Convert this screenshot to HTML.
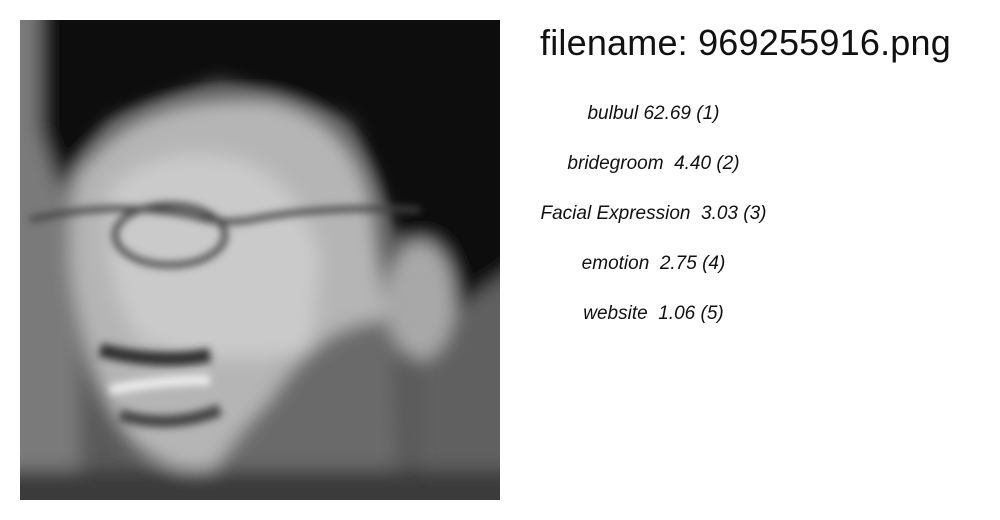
<!DOCTYPE html>
<html><head><style>
html,body{margin:0;padding:0;background:#fff;width:1000px;height:520px;overflow:hidden;font-family:"Liberation Sans","DejaVu Sans",sans-serif}
.img{position:absolute;left:20px;top:20px;width:480px;height:480px}
.t{position:absolute;left:540px;top:22px;font-size:36px;color:#111;white-space:nowrap;letter-spacing:0.2px}
.l{position:absolute;left:540px;width:227px;text-align:center;font-style:italic;font-size:19px;color:#111;white-space:pre}
</style></head><body>
<svg class="img" viewBox="0 0 480 480">
<defs>
<filter id="b" x="-20%" y="-20%" width="140%" height="140%"><feGaussianBlur stdDeviation="9"/></filter>
<filter id="b2"><feGaussianBlur stdDeviation="4"/></filter>
<clipPath id="c"><rect width="480" height="480"/></clipPath>
</defs>
<g clip-path="url(#c)">
<rect width="480" height="480" fill="#5a5a5a"/>
<g filter="url(#b)">
<rect x="-40" y="-40" width="100" height="560" fill="#7a7a7a"/>
<rect x="400" y="60" width="120" height="460" fill="#606060"/>
<path d="M20 -40 H520 V230 L420 300 L370 200 L330 100 L200 60 L90 100 L40 170 L20 110 Z" fill="#111"/>
<path d="M60 150 Q120 70 250 80 Q340 100 355 200 L370 330 Q350 420 260 450 Q160 470 110 420 Q70 370 60 300 Q40 220 60 150Z" fill="#b5b5b5"/>
<path d="M90 170 Q140 120 220 140 Q280 160 300 240 L290 330 Q200 350 120 320 Q80 260 90 170Z" fill="#cacaca"/>
<ellipse cx="400" cy="280" rx="35" ry="60" fill="#a8a8a8"/>
<path d="M250 380 Q300 300 370 300 L380 520 H150 Q200 430 250 380Z" fill="#6a6a6a"/>
<rect x="-40" y="450" width="560" height="70" fill="#3a3a3a"/>
</g>
<g filter="url(#b2)" fill="none" stroke="#444" stroke-width="6">
<path d="M10 200 Q90 180 170 195 Q200 205 230 200 Q300 185 400 190"/>
<ellipse cx="150" cy="215" rx="55" ry="30"/>
<path d="M80 330 Q140 345 190 335" stroke="#333" stroke-width="14"/>
<path d="M90 370 Q140 360 190 360" stroke="#eee" stroke-width="10"/>
<path d="M100 395 Q150 410 200 390" stroke="#444" stroke-width="12"/>
</g>
</g>
</svg>
<div class="t">filename: 969255916.png</div>
<div class="l" style="top:103px">bulbul 62.69 (1)</div>
<div class="l" style="top:153px">bridegroom  4.40 (2)</div>
<div class="l" style="top:203px">Facial Expression  3.03 (3)</div>
<div class="l" style="top:253px">emotion  2.75 (4)</div>
<div class="l" style="top:303px">website  1.06 (5)</div>
</body></html>
